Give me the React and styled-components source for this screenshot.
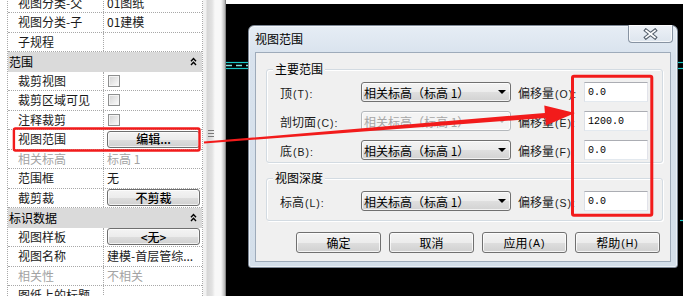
import React from 'react';
import styled, { createGlobalStyle } from 'styled-components';

const GlobalStyle = createGlobalStyle`
  html, body { margin: 0; padding: 0; background: #fff; }
  body {
    font-family: "Noto Sans CJK SC", "Noto Sans", sans-serif;
    font-size: 12px;
    color: #1a1a1a;
  }
  * { box-sizing: border-box; }
`;

const Screen = styled.div`
  position: relative;
  width: 687px;
  height: 296px;
  overflow: hidden;
  display: flex;
  background: #fff;
`;

/* ---------- property panel ---------- */
const Panel = styled.div`
  flex: none;
  width: 203px;
  height: 296px;
  overflow: hidden;
  padding-left: 7px;
`;

const PropList = styled.div`
  margin-top: -6.5px;
  border-left: 1px dotted #a8a8a8;
  border-right: 1px dotted #a8a8a8;
`;

const PropRow = styled.div`
  display: grid;
  grid-template-columns: 96px 1fr;
  height: 19.5px;
  border-bottom: 1px dotted #a8a8a8;
`;

const PropLabel = styled.div`
  display: flex;
  align-items: center;
  padding-left: 10px;
  border-right: 1px dotted #a8a8a8;
  color: ${p => (p.$muted ? '#a3a3a3' : '#1a1a1a')};
  white-space: nowrap;
  line-height: 1;
`;

const PropValue = styled.div`
  display: flex;
  align-items: center;
  padding-left: 3px;
  padding-right: 2px;
  color: ${p => (p.$muted ? '#a3a3a3' : '#1a1a1a')};
  white-space: nowrap;
  line-height: 1;
`;

const SectionHeader = styled.div`
  display: flex;
  align-items: center;
  justify-content: space-between;
  height: 19.5px;
  padding: 0 5px 0 1px;
  background: #dadada;
  color: #000;
  line-height: 1;
`;

const Check = styled.span`
  width: 12px;
  height: 12px;
  margin-left: 1px;
  border: 1px solid #8e8f8f;
  background: linear-gradient(135deg, #d2d2d2, #fdfdfd);
  box-shadow: inset 0 0 0 1px #f4f4f4;
`;

const CellButton = styled.div`
  flex: 1;
  height: 17px;
  display: flex;
  align-items: center;
  justify-content: center;
  border: 1px solid #6f6f6f;
  border-radius: 3px;
  background: linear-gradient(#f4f4f4 0%, #ececec 50%, #dedede 51%, #d0d0d0 100%);
  box-shadow: inset 0 0 0 1px rgba(255, 255, 255, 0.7);
  color: #000;
  font-weight: 500;
  line-height: 1;
`;

const Scrollbar = styled.div`
  flex: none;
  width: 23px;
  height: 296px;
  display: flex;
  flex-direction: column;
  padding: 130px 0 0 5px;
  background: linear-gradient(
    to right,
    #f2f2f2 0 3px,
    #d6d6d6 4px,
    #e2e2e2 9px,
    #f8f8f8 12px,
    #f8f8f8 18px,
    #d8d8d8 20px,
    #b2b2b2 22px,
    #5a5a5a 23px
  );
`;

const Grip = styled.div`
  width: 6px;
  height: 7px;
  background: repeating-linear-gradient(#7a7a7a 0 1px, transparent 1px 3px);
`;

/* ---------- canvas + dialog ---------- */
const Canvas = styled.div`
  position: relative;
  flex: 1;
  margin: 4px 4px 0 0;
  background: #000;
`;

const CadLines = styled.svg`
  position: absolute;
  left: 0;
  top: 0;
`;

const Window = styled.div`
  position: absolute;
  left: 22px;
  top: 21px;
  width: 430px;
  height: 243px;
  display: flex;
  flex-direction: column;
  padding: 0 6px 5px 6px;
  border: 1px solid #7d8896;
  border-radius: 6px 6px 3px 3px;
  background: linear-gradient(#e6edf5, #d8e2ed 30px, #d4dfea);
  box-shadow: inset 0 0 0 1px rgba(255, 255, 255, 0.55);
`;

const TitleBar = styled.div`
  flex: none;
  height: 26px;
  display: flex;
  align-items: flex-start;
  justify-content: space-between;
`;

const Title = styled.div`
  line-height: 25px;
  color: #000;
`;

const CloseButton = styled.div`
  width: 45px;
  height: 18px;
  margin: -1px -2px 0 0;
  display: flex;
  align-items: center;
  justify-content: center;
  border: 1px solid #8793a2;
  border-top: none;
  border-radius: 0 0 4px 4px;
  background: linear-gradient(#eef2f7, #dde5ee);
  box-shadow: inset 0 0 0 1px rgba(255, 255, 255, 0.7);
`;

const Body = styled.div`
  flex: 1;
  display: flex;
  flex-direction: column;
  padding: 0 7px 0 10px;
  border: 1px solid #9eabba;
  background: #f0f0f0;
`;

const Group = styled.div`
  display: flex;
  flex-direction: column;
  margin-top: ${p => p.$top}px;
  padding-bottom: ${p => p.$bottom}px;
  border: 1px solid #d3dbe2;
  border-radius: 3px;
  box-shadow: inset 1px 1px 0 #fff, 1px 1px 0 #fff;
`;

const GroupTitle = styled.div`
  align-self: flex-start;
  margin: -8px 0 0 6px;
  padding: 0 2px;
  line-height: 14px;
  background: #f0f0f0;
  color: #000;
`;

const FieldRow = styled.div`
  display: flex;
  align-items: center;
  height: 20px;
  margin-top: ${p => p.$top}px;
  padding-left: 13px;
`;

const FieldLabel = styled.div`
  width: ${p => p.$w}px;
  margin-left: ${p => p.$ml || 0}px;
  flex: none;
  white-space: nowrap;
  color: #1a1a1a;
`;

const Key = styled.span`
  font-family: "Liberation Sans", Arial, sans-serif;
  font-size: 10.5px;
  letter-spacing: 1px;
  margin-left: 1px;
`;

const Select = styled.div`
  flex: none;
  width: 150px;
  height: 20px;
  display: flex;
  align-items: center;
  justify-content: space-between;
  padding: 0 4px 0 2px;
  border: 1px solid ${p => (p.$disabled ? '#b4b8bc' : '#707070')};
  border-radius: 3px;
  background: ${p =>
    p.$disabled
      ? '#f4f4f4'
      : 'linear-gradient(#f3f3f3 0%, #ececec 50%, #dfdfdf 51%, #d2d2d2 100%)'};
  box-shadow: inset 0 0 0 1px rgba(255, 255, 255, 0.7);
  color: ${p => (p.$disabled ? '#a6a6a6' : '#000')};
  white-space: nowrap;
`;

const Arrow = styled.span`
  width: 0;
  height: 0;
  border-left: 4px solid transparent;
  border-right: 4px solid transparent;
  border-top: 4px solid ${p => (p.$disabled ? '#b0b0b0' : '#000')};
`;

const TextInput = styled.div`
  flex: none;
  width: 64px;
  height: 20px;
  display: flex;
  align-items: center;
  padding-left: 3px;
  border: 1px solid;
  border-color: #abadb3 #e2e3ea #e3e9ef #dbdfe6;
  background: #fff;
  font-family: "Liberation Mono", "Courier New", monospace;
  font-size: 10px;
  color: #000;
`;

const ButtonRow = styled.div`
  display: flex;
  justify-content: flex-end;
  gap: 8px;
  margin-top: 11px;
  padding-right: 3px;
`;

const DialogButton = styled.div`
  width: 85px;
  height: 21px;
  display: flex;
  align-items: center;
  justify-content: center;
  border: 1px solid #707070;
  border-radius: 3px;
  background: linear-gradient(#f3f3f3 0%, #ececec 50%, #dedede 51%, #d0d0d0 100%);
  box-shadow: inset 0 0 0 1px rgba(255, 255, 255, 0.75);
  color: #000;
  white-space: nowrap;
`;

const Annotation = styled.svg`
  position: absolute;
  left: 0;
  top: 0;
  pointer-events: none;
`;

/* ---------- data ---------- */
const rows = [
  { type: 'row', label: '视图分类-父', value: '01图纸' },
  { type: 'row', label: '视图分类-子', value: '01建模' },
  { type: 'row', label: '子规程', value: '' },
  { type: 'header', label: '范围' },
  { type: 'row', label: '裁剪视图', check: true },
  { type: 'row', label: '裁剪区域可见', check: true },
  { type: 'row', label: '注释裁剪', check: true },
  { type: 'row', label: '视图范围', button: '编辑...' },
  { type: 'row', label: '相关标高', value: '标高 1', muted: true },
  { type: 'row', label: '范围框', value: '无' },
  { type: 'row', label: '截剪裁', button: '不剪裁' },
  { type: 'header', label: '标识数据' },
  { type: 'row', label: '视图样板', button: '<无>' },
  { type: 'row', label: '视图名称', value: '建模-首层管综...' },
  { type: 'row', label: '相关性', value: '不相关', muted: true },
  { type: 'row', label: '图纸上的标题', value: '' },
];

const Collapse = () => (
  <svg width="7" height="9" viewBox="0 0 7 9">
    <path d="M1 4.2 L3.5 1.5 L6 4.2 M1 8 L3.5 5.3 L6 8" fill="none" stroke="#000" strokeWidth="1.4" />
  </svg>
);

const CloseGlyph = () => (
  <svg width="15" height="12" viewBox="0 0 15 12">
    <path d="M3 2.5 L12 9.5 M12 2.5 L3 9.5" stroke="#56616e" strokeWidth="3.8" strokeLinecap="square" />
    <path d="M3 2.5 L12 9.5 M12 2.5 L3 9.5" stroke="#fff" strokeWidth="1.6" strokeLinecap="square" />
  </svg>
);

const Field = ({ label, k, level, disabled, okey, offset, top }) => (
  <FieldRow $top={top}>
    <FieldLabel $w={81}>
      {label}
      <Key>({k}):</Key>
    </FieldLabel>
    <Select $disabled={disabled}>
      <span>{level}</span>
      <Arrow $disabled={disabled} />
    </Select>
    <FieldLabel $w={66} $ml={7}>
      偏移量<Key>({okey}):</Key>
    </FieldLabel>
    <TextInput>{offset}</TextInput>
  </FieldRow>
);

export default function App() {
  const level = '相关标高（标高 1）';
  return (
    <>
      <GlobalStyle />
      <Screen>
        <Panel>
          <PropList>
            {rows.map((r, i) =>
              r.type === 'header' ? (
                <SectionHeader key={i}>
                  <span>{r.label}</span>
                  <Collapse />
                </SectionHeader>
              ) : (
                <PropRow key={i}>
                  <PropLabel $muted={r.muted}>{r.label}</PropLabel>
                  <PropValue $muted={r.muted}>
                    {r.check && <Check />}
                    {r.button && <CellButton>{r.button}</CellButton>}
                    {r.value}
                  </PropValue>
                </PropRow>
              )
            )}
          </PropList>
        </Panel>
        <Scrollbar>
          <Grip />
        </Scrollbar>
        <Canvas>
          <CadLines width="457" height="292">
            <line x1="0" y1="58.5" x2="22" y2="58.5" stroke="#19c7c7" strokeWidth="1.2" />
            <line x1="0" y1="61.5" x2="22" y2="61.5" stroke="#7fe3e3" strokeWidth="1.5" strokeDasharray="6 4" />
            <line x1="0" y1="64.5" x2="22" y2="64.5" stroke="#19c7c7" strokeWidth="1.2" />
            <line x1="452" y1="58.5" x2="457" y2="58.5" stroke="#19c7c7" strokeWidth="1.2" />
            <line x1="452" y1="64.5" x2="457" y2="64.5" stroke="#19c7c7" strokeWidth="1.2" />
            <line x1="454" y1="216.5" x2="457" y2="216.5" stroke="#19c7c7" strokeWidth="1.2" />
          </CadLines>
          <Window>
            <TitleBar>
              <Title>视图范围</Title>
              <CloseButton>
                <CloseGlyph />
              </CloseButton>
            </TitleBar>
            <Body>
              <Group $top={16} $bottom={2}>
                <GroupTitle>主要范围</GroupTitle>
                <Field top={6} label="顶" k="T" level={level} okey="O" offset="0.0" />
                <Field top={9} label="剖切面" k="C" level={level} disabled okey="E" offset="1200.0" />
                <Field top={9} label="底" k="B" level={level} okey="F" offset="0.0" />
              </Group>
              <Group $top={15} $bottom={9}>
                <GroupTitle>视图深度</GroupTitle>
                <Field top={6} label="标高" k="L" level={level} okey="S" offset="0.0" />
              </Group>
              <ButtonRow>
                <DialogButton>确定</DialogButton>
                <DialogButton>取消</DialogButton>
                <DialogButton>
                  应用<Key>(A)</Key>
                </DialogButton>
                <DialogButton>
                  帮助<Key>(H)</Key>
                </DialogButton>
              </ButtonRow>
            </Body>
          </Window>
        </Canvas>
        <Annotation width="687" height="296" viewBox="0 0 687 296">
          <rect x="13.9" y="128.5" width="185.6" height="22" rx="1.5" fill="none" stroke="#f21b1b" strokeWidth="2.4" />
          <rect x="572.5" y="76.3" width="79.3" height="138.9" rx="1.5" fill="none" stroke="#f21b1b" strokeWidth="3" />
          <polygon
            points="203.9,141.6 544.9,112.9 544.3,105.4 575,113 545.9,125.4 545.3,117.9 204.1,143.4"
            fill="#f21b1b"
          />
        </Annotation>
      </Screen>
    </>
  );
}
